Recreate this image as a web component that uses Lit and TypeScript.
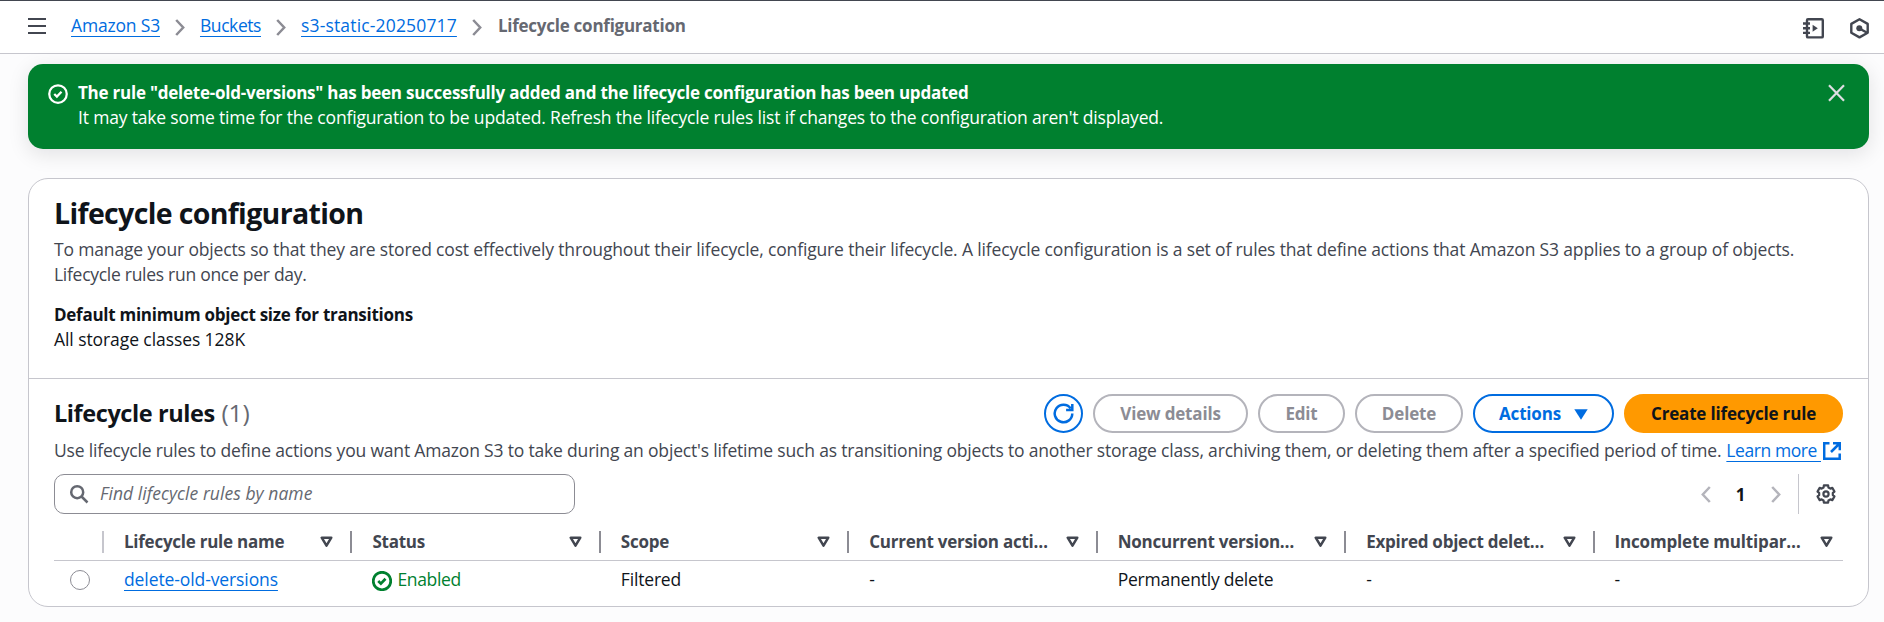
import { LitElement, html, css, svg } from "lit";
import { customElement } from "lit/decorators.js";

const COLUMNS = [
  "Lifecycle rule name",
  "Status",
  "Scope",
  "Current version acti…",
  "Noncurrent version…",
  "Expired object delet…",
  "Incomplete multipar…",
];

const gearPath = (() => {
  const pts: string[] = [];
  for (let i = 0; i < 6; i++) {
    const mid = i * 60 - 90;
    for (const [offset, r] of [[-21, 6.9], [-14, 8.8], [14, 8.8], [21, 6.9]]) {
      const a = ((mid + offset) * Math.PI) / 180;
      pts.push(`${(10 + r * Math.cos(a)).toFixed(2)} ${(10 + r * Math.sin(a)).toFixed(2)}`);
    }
  }
  return `M${pts.join("L")}Z`;
})();

const chevron = html`<svg class="chevron" width="10" height="17" viewBox="0 0 10 17">${svg`<path d="M1.2 1 8.2 8.5 1.2 16"/>`}</svg>`;
const check = html`<svg class="check" width="20" height="20" viewBox="0 0 16 16">${svg`<circle cx="8" cy="8" r="7"/><path d="m5 8 2.1 2.1 3.7-3.9"/>`}</svg>`;

@customElement("app-root")
export class AppRoot extends LitElement {
  static styles = css`
    :host {
      display: block;
      height: 622px;
      overflow: hidden;
      background: #fcfcfd;
      color: #0f141a;
      font: 400 17.5px/25px "Open Sans", "Noto Sans", sans-serif;
      letter-spacing: -0.18px;
      white-space: nowrap;
    }
    * { box-sizing: border-box; }
    svg { display: block; flex: none; fill: none; stroke: currentColor; stroke-width: 2.2; }
    h1, h2, p { margin: 0; }
    a {
      color: #006ce0;
      text-decoration: underline;
      text-decoration-thickness: 1px;
      text-underline-offset: 4px;
      text-decoration-skip-ink: none;
    }
    .bold { font-weight: 700; font-size: 17px; letter-spacing: -0.27px; }

    .topbar {
      display: flex;
      align-items: center;
      height: 54px;
      padding: 0 15px 0 28px;
      background: #fff;
      border-top: 1px solid #424650;
      border-bottom: 1px solid #c6c6cd;
      color: #424650;
    }
    .menu { margin: 0 25px 3px 0; stroke-width: 2; }
    .crumbs { display: flex; align-items: center; flex: 1; padding-bottom: 3px; }
    .crumbs .chevron { margin: 3px 15px 0; color: #8c8c94; stroke-width: 2.5; }
    .crumbs .buckets { letter-spacing: -0.43px; }
    .crumbs .bucket { letter-spacing: 0.16px; }
    .crumbs .bold { color: #656871; margin-left: 1px; letter-spacing: -0.25px; }
    .tools { display: flex; align-items: center; gap: 26px; padding-top: 2px; }
    .tools svg { stroke-width: 2.4; }

    .banner {
      display: flex;
      height: 85px;
      margin: 10px 15px 0 28px;
      padding: 16px 24px 0 20px;
      border-radius: 15px;
      background: #00802f;
      color: #fff;
      box-shadow: 0 5px 20px 1px rgba(0, 7, 22, 0.1);
    }
    .banner .check { margin: 4px 10px 0 0; stroke-width: 1.8; }
    .banner .message { flex: 1; letter-spacing: -0.173px; }
    .banner .bold { letter-spacing: -0.235px; }
    .banner .close { margin-top: 4px; color: #dedee3; }

    .card {
      height: 429px;
      margin: 29px 15px 0 28px;
      border: 1px solid #c6c6cd;
      border-radius: 20px;
      background: #fff;
    }
    .summary { height: 200px; padding: 16px 25px 0; border-bottom: 1px solid #c6c6cd; }
    h1 { font-size: 28.5px; line-height: 37px; letter-spacing: -0.65px; }
    .muted { color: #424650; }
    .summary .muted { margin: 5px 0 15px; letter-spacing: -0.153px; }
    .summary .second { display: block; letter-spacing: -0.28px; }
    .summary .size { letter-spacing: -0.08px; }
    .rules { padding: 15px 25px 0; }
    .head { display: flex; align-items: center; height: 39px; }
    h2 { flex: 1; font-size: 23.5px; line-height: 30px; letter-spacing: -0.42px; padding-bottom: 1px; }
    h2 span { font-size: 24.5px; font-weight: 400; color: #656871; letter-spacing: 0; margin-left: 1px; }

    .actions { display: flex; gap: 10px; }
    .btn {
      display: flex;
      align-items: center;
      justify-content: center;
      height: 39px;
      border: 2px solid #b4b4bb;
      border-radius: 20px;
      color: #8c8c94;
      padding-bottom: 1px;
      letter-spacing: -0.17px;
    }
    .refresh { width: 39px; padding: 0; }
    .view { width: 155px; }
    .edit { width: 87px; }
    .delete { width: 108px; }
    .menu-btn { width: 141px; gap: 13px; }
    .create { width: 219px; }
    .blue { border-color: #006ce0; color: #006ce0; }
    .create { border-color: #f90; background: #f90; color: #0f141a; }
    .caret { fill: currentColor; stroke: none; margin-top: 3px; }

    .intro { display: flex; margin-top: 5px; letter-spacing: -0.182px; }
    .intro a { margin-left: 5px; letter-spacing: -0.43px; white-space: pre; }
    .intro svg { margin: 4px 0 0 2px; color: #006ce0; }

    .filters { display: flex; align-items: center; height: 40px; margin-top: 11px; }
    .search {
      display: flex;
      align-items: center;
      gap: 11px;
      width: 521px;
      height: 40px;
      padding: 0 14px;
      border: 1px solid #8c8c94;
      border-radius: 10px;
      color: #656871;
      font-style: italic;
      letter-spacing: 0.05px;
    }
    .search svg { stroke-width: 2.5; }
    .search span { padding-bottom: 1px; }
    .pager { display: flex; align-items: center; height: 40px; margin-left: auto; color: #b4b4bb; }
    .pager .chevron { stroke-width: 2.5; }
    .prev { transform: scaleX(-1); }
    .page { width: 60px; padding-right: 1px; text-align: center; color: #0f141a; }
    .settings {
      display: flex;
      align-items: center;
      height: 40px;
      margin-left: 17px;
      padding: 0 7px 0 17px;
      border-left: 1px solid #c6c6cd;
      color: #424650;
    }

    .grid { display: grid; grid-template-columns: 50px repeat(7, 1fr); }
    .thead { height: 47px; padding-top: 17px; border-bottom: 1px solid #c6c6cd; color: #424650; }
    .th {
      display: flex;
      justify-content: space-between;
      align-items: center;
      height: 22px;
      padding: 0 17px 0 20px;
      border-right: 2px solid #8c8c94;
      letter-spacing: -0.25px;
    }
    .th span { margin-top: -1px; }
    .th:first-child { border-color: #c6c6cd; }
    .th:last-child { padding-right: 10px; border-right: 0; letter-spacing: -0.17px; }
    .th svg { stroke-width: 2.5; }
    .row { height: 45px; padding-top: 6px; }
    .td { display: flex; padding-left: 20px; }
    .radio {
      width: 20px;
      height: 20px;
      margin: 3px 0 0 16px;
      border: 1px solid #8c8c94;
      border-radius: 50%;
      background: #fff;
    }
    .name { letter-spacing: -0.1px; }
    .enabled { color: #00802f; gap: 5px; letter-spacing: -0.35px; }
    .enabled svg { margin: 4px 0 0; }
    .tight { letter-spacing: -0.22px; }
  `;

  render() {
    return html`
      <header class="topbar">
        <svg class="menu" width="18" height="16" viewBox="0 0 18 16">${svg`<path d="M0 1h18M0 8h18M0 15h18"/>`}</svg>
        <nav class="crumbs">
          <a>Amazon S3</a>${chevron}<a class="buckets">Buckets</a>${chevron}<a class="bucket">s3-static-20250717</a>${chevron}
          <span class="bold">Lifecycle configuration</span>
        </nav>
        <div class="tools">
          <svg width="21" height="21" viewBox="0 0 21 21">${svg`<rect x="4" y="1.2" width="15.8" height="18.2" rx="1"/><path d="M0 5.5h7M0 10.2h7M0 14.9h7"/><path d="M9.6 6.8v7l5.2-3.5z" fill="currentColor" stroke="none"/>`}</svg>
          <svg width="19" height="21" viewBox="0 0 19 21">${svg`<path d="M9.5 1.3 17.7 5.9v8.9L9.5 19.4 1.3 14.8v-8.9z" stroke-linejoin="round"/><circle cx="9.3" cy="10.2" r="3" fill="currentColor" stroke="none"/><path d="m9.5 10.5 7.6 4.2"/>`}</svg>
        </div>
      </header>

      <section class="banner">
        ${check}
        <div class="message">
          <p class="bold">The rule "delete-old-versions" has been successfully added and the lifecycle configuration has been updated</p>
          <p>It may take some time for the configuration to be updated. Refresh the lifecycle rules list if changes to the configuration aren't displayed.</p>
        </div>
        <svg class="close" width="17" height="18" viewBox="0 0 17 18">${svg`<path d="m1 1.3 15 15.4M16 1.3 1 16.7"/>`}</svg>
      </section>

      <main class="card">
        <section class="summary">
          <h1>Lifecycle configuration</h1>
          <p class="muted">
            To manage your objects so that they are stored cost effectively throughout their lifecycle, configure their lifecycle. A lifecycle configuration is a set of rules that define actions that Amazon S3 applies to a group of objects.
            <span class="second">Lifecycle rules run once per day.</span>
          </p>
          <p class="bold">Default minimum object size for transitions</p>
          <p class="size">All storage classes 128K</p>
        </section>

        <section class="rules">
          <div class="head">
            <h2>Lifecycle rules <span>(1)</span></h2>
            <div class="actions">
              <div class="btn blue refresh">
                <svg width="21" height="21" viewBox="0 0 21 21">${svg`<path d="M19.3 10.5a8.8 8.8 0 1 1-1.6-5.1M19.3 1v6h-6.2" stroke-width="2.5"/>`}</svg>
              </div>
              <div class="btn bold view">View details</div>
              <div class="btn bold edit">Edit</div>
              <div class="btn bold delete">Delete</div>
              <div class="btn bold blue menu-btn">Actions<svg class="caret" width="14" height="11" viewBox="0 0 14 11">${svg`<path d="M.3.3h13.4L7 10.8z"/>`}</svg></div>
              <div class="btn bold create">Create lifecycle rule</div>
            </div>
          </div>
          <div class="intro muted">
            <span>Use lifecycle rules to define actions you want Amazon S3 to take during an object's lifetime such as transitioning objects to another storage class, archiving them, or deleting them after a specified period of time.</span>
            <a>Learn more </a>
            <svg width="18" height="18" viewBox="0 0 18 18">${svg`<path d="M6.5 1.3H1.2v15.5h15.5v-5.3M10 1.3h6.8v6.9M16.5 1.5 8 10" stroke-width="2.5"/>`}</svg>
          </div>

          <div class="filters">
            <div class="search">
              <svg width="20" height="20" viewBox="0 0 20 20">${svg`<circle cx="8.2" cy="8.2" r="6"/><path d="m12.5 12.5 6 6"/>`}</svg>
              <span>Find lifecycle rules by name</span>
            </div>
            <div class="pager">
              <svg class="prev chevron" width="10" height="17" viewBox="0 0 10 17">${svg`<path d="M1.2 1 8.2 8.5 1.2 16"/>`}</svg>
              <span class="page bold">1</span>
              ${chevron}
              <div class="settings">
                <svg width="20" height="20" viewBox="0 0 20 20">${svg`<path d=${gearPath} stroke-linejoin="round"/><circle cx="10" cy="10" r="2.6"/>`}</svg>
              </div>
            </div>
          </div>

          <div class="grid thead">
            <div class="th"></div>
            ${COLUMNS.map(
              (label) => html`<div class="th bold">
                <span>${label}</span>
                <svg width="13" height="12" viewBox="0 0 13 12">${svg`<path d="M1.7 1.7h9.6L6.5 9.7z" stroke-linejoin="round"/>`}</svg>
              </div>`
            )}
          </div>
          <div class="grid row">
            <div class="radio"></div>
            <div class="td"><a class="name">delete-old-versions</a></div>
            <div class="td enabled">${check}<span>Enabled</span></div>
            <div class="td">Filtered</div>
            <div class="td">-</div>
            <div class="td tight">Permanently delete</div>
            <div class="td">-</div>
            <div class="td">-</div>
          </div>
        </section>
      </main>
    `;
  }
}
